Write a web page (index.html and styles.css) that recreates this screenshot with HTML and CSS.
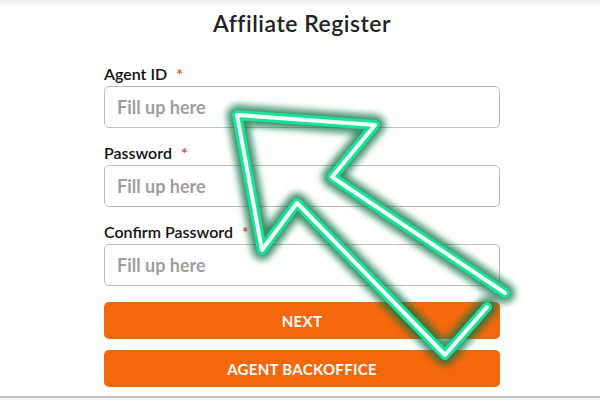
FILE: index.html
```html
<!DOCTYPE html>
<html lang="en">
<head>
  <meta charset="UTF-8">
  <title>Affiliate Register</title>
  <link rel="stylesheet" href="styles.css">
</head>
<body>

<div class="top-bar"></div>

<div class="register-box">
  <h2 class="title">Affiliate Register</h2>

  <form class="register-form">
    <div class="field">
      <label>Agent ID <span class="req">*</span></label>
      <input type="text" placeholder="Fill up here">
    </div>
    <div class="field">
      <label>Password <span class="req">*</span></label>
      <input type="password" placeholder="Fill up here">
    </div>
    <div class="field">
      <label>Confirm Password <span class="req">*</span></label>
      <input type="password" placeholder="Fill up here">
    </div>

    <button type="button" class="btn">NEXT</button>
    <button type="button" class="btn">AGENT BACKOFFICE</button>
  </form>
</div>

<div class="bottom-bar"></div>

<!-- neon arrow drawn over the form -->
<svg class="neon-arrow" width="600" height="400" viewBox="0 0 600 400">
  <defs>
    <filter id="glow" x="-20%" y="-20%" width="140%" height="140%">
      <feGaussianBlur stdDeviation="3.5"/>
    </filter>
  </defs>
  <g fill="none" stroke-linejoin="round" stroke-linecap="round">
    <path class="arrow-glow" d="M487 307 L445 355 L297 203 L262 250 L237 115 L375 125 L332 177 L505 293"/>
    <path class="arrow-line" d="M487 307 L445 355 L297 203 L262 250 L237 115 L375 125 L332 177 L505 293"/>
    <path class="arrow-core" d="M487 307 L445 355 L297 203 L262 250 L237 115 L375 125 L332 177 L505 293"/>
  </g>
</svg>

</body>
</html>
```

FILE: styles.css
```css
  body {
    margin: 0;
    font-family: Lato, "Open Sans", Arial, sans-serif;
    background: white;
    color: #222;
    width: 600px;
    height: 400px;
    overflow: hidden;
    position: relative;
  }
  .top-bar {
    height: 5px;
    background: linear-gradient(#eeeeee, #fafafa);
  }
  .register-box {
    width: 396px;
    margin: 0 auto;
    padding-left: 4px;
  }
  .title {
    margin: 4px 0 0;
    font-size: 23px;
    font-weight: 600;
    text-align: center;
    letter-spacing: 0.5px;
    color: #222;
  }
  .register-form {
    margin-top: 28px;
  }
  .field {
    margin-bottom: 16px;
  }
  .field label {
    display: block;
    font-size: 16px;
    line-height: 18px;
    font-weight: 600;
    margin-bottom: 3px;
    color: #111;
  }
  .req {
    color: #e53935;
    margin-left: 5px;
  }
  .field input {
    box-sizing: border-box;
    display: block;
    width: 100%;
    height: 42px;
    border: 1px solid #bdbdbd;
    border-radius: 5px;
    padding: 0 12px;
    font-family: inherit;
    font-size: 18px;
    font-weight: 700;
  }
  .field input::placeholder {
    color: #9e9e9e;
  }
  .btn {
    display: block;
    width: 100%;
    height: 37px;
    margin: 0 0 11px;
    border: none;
    border-radius: 5px;
    background: #f4680b;
    color: white;
    font-family: inherit;
    font-size: 15px;
    font-weight: 700;
    letter-spacing: 0.3px;
  }
  .register-form .btn:first-of-type {
    margin-top: 1px;
  }
  .bottom-bar {
    position: absolute;
    left: 0;
    right: 0;
    top: 396px;
    height: 4px;
    border-top: 2px solid #c4c4c4;
    background: #f4f4f4;
  }
  .neon-arrow {
    position: absolute;
    left: 0;
    top: 0;
  }
  .arrow-glow {
    stroke: #087245;
    stroke-width: 20;
    opacity: 0.8;
    filter: url(#glow);
  }
  .arrow-line {
    stroke: #16e39a;
    stroke-width: 10;
  }
  .arrow-core {
    stroke: #f4fffa;
    stroke-width: 4;
  }
```
